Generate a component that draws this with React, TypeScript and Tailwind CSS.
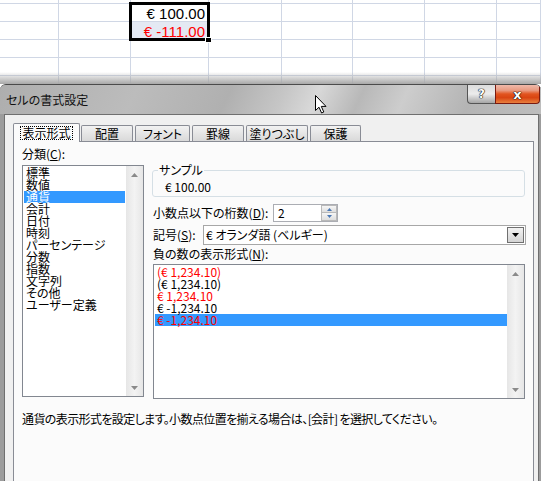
import React from 'react';

const COL_W = ['w-[59px]', 'w-[72px]', 'w-[78px]', 'w-[73px]', 'w-[71px]', 'w-[72px]', 'w-[72px]', 'w-[44px]'];
const ROW_H = ['h-[4px]', 'h-[18px]', 'h-[18px]', 'h-[18px]', 'h-[18px]', 'h-[18px]'];

const CATEGORIES = [
  '標準',
  '数値',
  '通貨',
  '会計',
  '日付',
  '時刻',
  'パーセンテージ',
  '分数',
  '指数',
  '文字列',
  'その他',
  'ユーザー定義',
];

const NEGATIVES = [
  { text: '(€ 1,234.10)', red: true },
  { text: '(€ 1,234.10)', red: false },
  { text: '€ 1,234.10', red: true },
  { text: '€ -1,234.10', red: false },
  { text: '€ -1,234.10', red: true },
];

const TABS = [
  { label: '配置', w: 'w-[52px]' },
  { label: 'フォント', w: 'w-[55px]' },
  { label: '罫線', w: 'w-[52px]' },
  { label: '塗りつぶし', w: 'w-[62px]' },
  { label: '保護', w: 'w-[51px]' },
];

function Sheet() {
  return (
    <div className="relative h-[84px] overflow-hidden bg-white">
      {ROW_H.map((h, r) => (
        <div key={r} className={`flex ${h}`}>
          {COL_W.map((w, c) => {
            const value = c === 2 && r === 1 ? '€ 100.00' : c === 2 && r === 2 ? '€ -111.00' : '';
            return (
              <div
                key={c}
                className={`${w} shrink-0 border-r border-b border-[#d0d7e5] flex items-end justify-end pr-[3px] ${
                  c === 2 && r === 2 ? 'bg-[#e4e9f3] text-[#ff0000]' : 'text-black'
                }`}
              >
                {value && (
                  <span className="font-['Liberation_Sans',sans-serif] text-[15px] leading-[15px]">{value}</span>
                )}
              </div>
            );
          })}
        </div>
      ))}
      {/* selection frame + fill handle */}
      <div className="absolute left-[129px] top-[2px] w-[81px] h-[39px] border-[3px] border-black" />
      <div className="absolute left-[205px] top-[37px] w-[7px] h-[6px] bg-black border border-white" />
      {/* dialog shadow */}
      <div className="absolute inset-x-0 bottom-0 h-[12px] bg-gradient-to-b from-white/0 to-[#a8a8a8]" />
    </div>
  );
}

function ScrollArrow({ down }: { down?: boolean }) {
  return (
    <svg width="7" height="4" viewBox="0 0 7 4">
      <path d={down ? 'M0 0 H7 L3.5 4 Z' : 'M0 4 H7 L3.5 0 Z'} fill="#8a8a8a" />
    </svg>
  );
}

function ScrollBar() {
  return (
    <div className="w-[17px] shrink-0 flex flex-col justify-between bg-gradient-to-r from-[#e6e6e6] via-[#f3f3f3] to-[#e6e6e6]">
      <div className="h-[17px] flex items-center justify-center">
        <ScrollArrow />
      </div>
      <div className="h-[17px] flex items-center justify-center">
        <ScrollArrow down />
      </div>
    </div>
  );
}

function Panel() {
  return (
    <div className="w-[521px] h-[400px] border border-[#898c95] bg-[#fbfbfb] -mt-[1px] pl-[8px] flex flex-col">
      <div className="flex items-start">
        {/* category list */}
        <div className="w-[122px] pt-[6px]">
          <div className="leading-[12px]">
            分類(<span className="underline">C</span>):
          </div>
          <div className="mt-[5px] h-[232px] border border-[#828790] bg-white flex">
            <div className="flex-1 p-[1px]">
              {CATEGORIES.map((c) => (
                <div
                  key={c}
                  className={`h-[12px] leading-[12px] pl-[2px] whitespace-nowrap ${
                    c === '通貨' ? 'bg-[#3399ff] text-white' : ''
                  }`}
                >
                  {c}
                </div>
              ))}
            </div>
            <ScrollBar />
          </div>
        </div>

        {/* right side */}
        <div className="ml-[8px] w-[374px] pt-[22px]">
          <fieldset className="w-[373px] border border-[#d5dfe5] rounded-[3px] pl-[5px] pb-[3px]">
            <legend className="px-[1px] leading-[12px]">サンプル</legend>
            <div className="mt-[5px] pl-[7px] leading-[12px]">€ 100.00</div>
          </fieldset>

          <div className="mt-[7px] flex items-center h-[18px]">
            <div className="w-[121px] pl-[1px] leading-[12px] whitespace-nowrap">
              小数点以下の桁数(<span className="underline">D</span>):
            </div>
            <div className="w-[65px] h-[18px] border border-[#abadb3] bg-white flex">
              <div className="flex-1 pl-[4px] leading-[16px]">2</div>
              <div className="w-[16px] flex flex-col">
                <div className="h-[8px] border border-[#b9b9b9] bg-gradient-to-b from-[#f6f6f6] to-[#dedede] flex items-center justify-center">
                  <svg width="5" height="3" viewBox="0 0 5 3">
                    <path d="M0 3 H5 L2.5 0 Z" fill="#4a78b5" />
                  </svg>
                </div>
                <div className="h-[8px] border border-t-0 border-[#b9b9b9] bg-gradient-to-b from-[#f6f6f6] to-[#dedede] flex items-center justify-center">
                  <svg width="5" height="3" viewBox="0 0 5 3">
                    <path d="M0 0 H5 L2.5 3 Z" fill="#4a78b5" />
                  </svg>
                </div>
              </div>
            </div>
          </div>

          <div className="mt-[3px] flex items-center h-[20px]">
            <div className="w-[51px] pl-[1px] leading-[12px] whitespace-nowrap">
              記号(<span className="underline">S</span>):
            </div>
            <div className="w-[323px] h-[20px] border border-[#a7a7a7] bg-white flex items-center">
              <div className="flex-1 pl-[2px] leading-[12px] whitespace-nowrap">€ オランダ語 (ベルギー)</div>
              <div className="w-[17px] h-[16px] mr-[1px] border border-[#707070] bg-gradient-to-b from-[#f2f2f2] to-[#d4d4d4] flex items-center justify-center">
                <svg width="7" height="4" viewBox="0 0 7 4">
                  <path d="M0 0 H7 L3.5 4 Z" fill="#000" />
                </svg>
              </div>
            </div>
          </div>

          <div className="mt-[3px] pl-[1px] leading-[12px] whitespace-nowrap">
            負の数の表示形式(<span className="underline">N</span>):
          </div>
          <div className="mt-[4px] ml-[1px] w-[372px] h-[135px] border border-[#828790] bg-white flex">
            <div className="flex-1 pl-[1px] pt-[1px]">
              {NEGATIVES.map((n, i) => (
                <div
                  key={i}
                  className={`h-[12px] leading-[12px] pl-[2px] ${
                    i === 4 ? 'bg-[#3399ff]' : ''
                  } ${n.red ? 'text-[#ff0000]' : 'text-black'}`}
                >
                  {n.text}
                </div>
              ))}
            </div>
            <ScrollBar />
          </div>
        </div>
      </div>

      <div className="mt-[14px] leading-[12px] whitespace-nowrap tracking-[-0.6px]">
        通貨の表示形式を設定します。小数点位置を揃える場合は、[会計] を選択してください。
      </div>
    </div>
  );
}

function Dialog() {
  return (
    <div className="h-[397px] flex flex-col rounded-t-[6px] border-t border-[#4b4b4b] bg-[#9c9c9c] overflow-hidden">
      {/* title bar */}
      <div className="h-[29px] shrink-0 flex items-start bg-[linear-gradient(115deg,#aeaeae_0%,#bcbcbc_25%,#b0b0b0_42%,#c6c6c6_52%,#d8d8d8_58%,#b8b8b8_66%,#cdcdcd_74%,#b4b4b4_86%,#bebebe_100%)]">
        <div className="pl-[6px] pt-[8px] text-[12px] leading-[14px] text-[#111]">セルの書式設定</div>
        <div className="ml-auto mr-[1px] flex">
          <div className="w-[28px] h-[19px] rounded-bl-[4px] border border-t-0 border-r-0 border-[#555] bg-gradient-to-b from-[#dcdcdc] via-[#ececec] to-[#a6a6a6] flex items-center justify-center">
            <span className="font-['DejaVu_Sans',sans-serif] font-bold text-[12px] leading-[12px] text-white [text-shadow:0_0_1px_#000,0_0_1px_#000,0_0_1px_#000]">
              ?
            </span>
          </div>
          <div className="w-[45px] h-[19px] rounded-br-[4px] border border-t-0 border-[#7a1a10] bg-[linear-gradient(180deg,#efb9aa_0%,#e99a80_30%,#e2541f_50%,#d94512_70%,#e8803e_100%)] flex items-center justify-center">
            <span className="font-['DejaVu_Sans',sans-serif] font-bold text-[13px] leading-[13px] text-white [text-shadow:0_0_1px_#000,0_0_1px_#000,0_0_1px_#000]">
              x
            </span>
          </div>
        </div>
      </div>

      {/* client area */}
      <div className="flex-1 ml-[4px] mr-[2px] border-l border-t border-r border-[#6f6f6f] bg-[#f0f0f0] pl-[8px] pt-[8px] overflow-hidden">
        <div className="flex items-end h-[19px]">
          <div className="relative z-10 w-[67px] h-[19px] border border-b-0 border-[#898c95] rounded-t-[2px] bg-[#fbfbfb] flex items-center justify-center">
            <span className="outline outline-1 outline-dotted outline-black px-[1px] leading-[12px]">表示形式</span>
          </div>
          {TABS.map((t, i) => (
            <div
              key={t.label}
              className={`${t.w} ${i === 0 ? 'ml-[1px]' : 'ml-[2px]'} h-[16px] mb-[1px] border border-b-0 border-[#898c95] rounded-t-[2px] bg-gradient-to-b from-[#f2f2f2] to-[#d9d9d9] flex items-center justify-center whitespace-nowrap leading-[12px]`}
            >
              {t.label}
            </div>
          ))}
        </div>
        <Panel />
      </div>
    </div>
  );
}

export default function App() {
  return (
    <div className="relative w-[541px] h-[481px] overflow-hidden bg-white text-[12px] text-black font-['Noto_Sans_CJK_JP',sans-serif] [font-feature-settings:'palt']">
      <Sheet />
      <Dialog />
      {/* mouse pointer */}
      <svg className="absolute left-[315px] top-[95px]" width="12" height="19" viewBox="0 0 12 19">
        <path d="M0.5 0.5 L0.5 15.5 L4 12.2 L6.6 18 L8.8 17 L6.3 11.4 L11 11.4 Z" fill="#fff" stroke="#000" strokeWidth="1" />
      </svg>
    </div>
  );
}
